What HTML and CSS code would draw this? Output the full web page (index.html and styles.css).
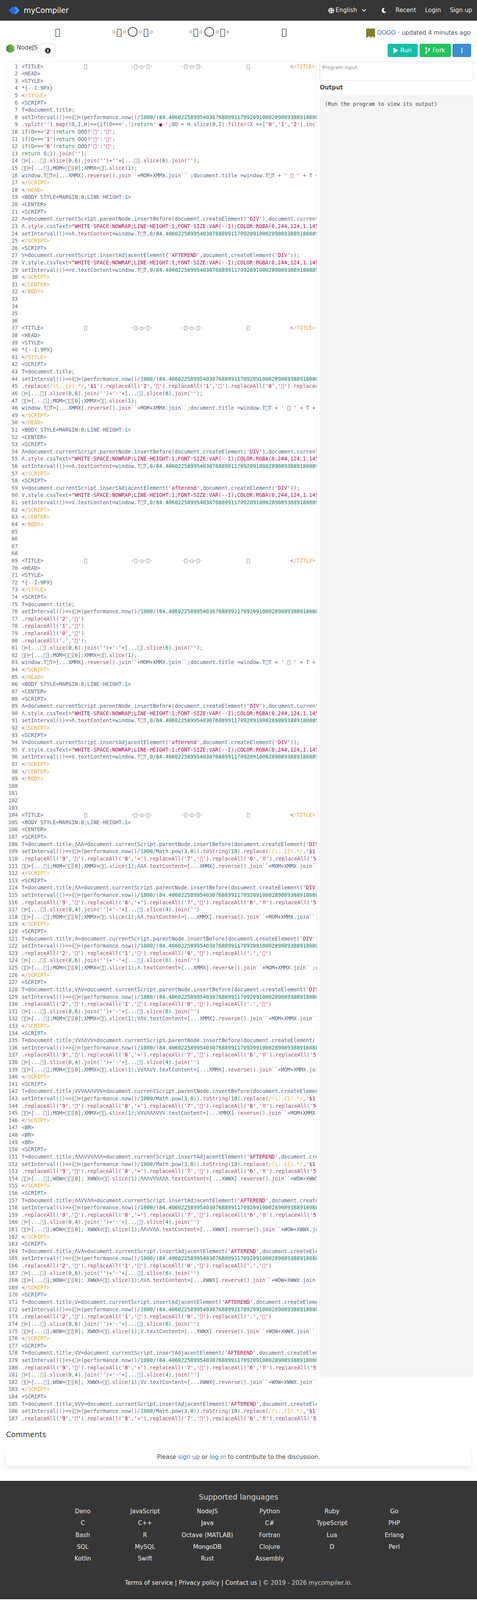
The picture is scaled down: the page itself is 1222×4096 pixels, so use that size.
FILE: index.html
```html
<!DOCTYPE html>
<html lang="en">
<head>
<meta charset="utf-8">
<title>myCompiler</title>
<link rel="stylesheet" href="styles.css">
</head>
<body>
<nav class="nav">
  <a class="brand">
    <svg class="brand-logo" viewBox="0 0 30 22"><path class="logo-back" d="M19 2 L28 11 L19 20 L10 11 Z"/><path class="logo-front" d="M11 2 L20 11 L11 20 L2 11 Z"/></svg>
    <span class="brand-name">myCompiler</span>
  </a>
  <div class="nav-right">
    <span class="lang">
      <svg class="ico-globe" viewBox="0 0 496 512"><path d="M336.5 160C322 70.7 287.8 8 248 8s-74 62.7-88.5 152h177zM152 256c0 22.2 1.2 43.5 3.3 64h185.3c2.1-20.5 3.3-41.8 3.3-64s-1.2-43.5-3.3-64H155.3c-2.1 20.5-3.3 41.8-3.3 64zm324.7-96c-28.6-67.9-86.5-120.4-158-141.6 24.4 33.8 41.2 84.7 50 141.6h108zM177.2 18.4C105.8 39.6 47.8 92.1 19.3 160h108c8.7-56.9 25.5-107.8 49.9-141.6zM487.4 192H372.7c2.1 21 3.3 42.5 3.3 64s-1.2 43-3.3 64h114.6c5.5-20.5 8.6-41.8 8.6-64s-3.1-43.5-8.5-64zM120 256c0-21.5 1.2-43 3.3-64H8.6C3.2 212.5 0 233.8 0 256s3.2 43.5 8.6 64h114.6c-2-21-3.2-42.5-3.2-64zm39.5 96c14.5 89.3 48.7 152 88.5 152s74-62.7 88.5-152h-177zm159.3 141.6c71.4-21.2 129.4-73.7 158-141.6h-108c-8.8 56.9-25.6 107.8-50 141.6zM19.3 352c28.6 67.9 86.5 120.4 158 141.6-24.4-33.8-41.2-84.7-50-141.6h-108z"/></svg>
      <span>English</span>
      <svg class="ico-chev" viewBox="0 0 14 10"><path d="M2 2 L7 7 L12 2"/></svg>
    </span>
    <svg class="ico-moon" viewBox="0 0 512 512"><path d="M283.211 512c78.962 0 151.079-35.925 198.857-94.792 7.068-8.708-.639-21.43-11.562-19.35-124.203 23.654-238.262-71.576-238.262-196.954 0-72.222 38.662-138.635 101.498-174.394 9.686-5.512 7.25-20.197-3.756-22.23A258.156 258.156 0 0 0 283.211 0c-141.309 0-256 114.511-256 256 0 141.309 114.511 256 256 256z"/></svg>
    <a class="nav-link">Recent</a>
    <a class="nav-link">Login</a>
    <a class="nav-link">Sign up</a>
  </div>
</nav>

<main class="main">
  <header class="head-row">
    <div class="title-wrap"><h1 class="title">&#xE000;                  ◦&#xE000;◦<span class="title-ring">○</span>◦&#xE000;◦            ◦&#xE000;◦<span class="title-ring">○</span>◦&#xE000;◦                  &#xE000;</h1></div>
    <div class="author">
      <svg class="avatar" viewBox="0 0 24 24"><rect width="24" height="24" fill="#7f7f30"/><rect x="6" y="21" width="4" height="3" fill="#fff"/><rect x="15" y="21" width="4" height="3" fill="#fff"/></svg>
      <a class="link">OOOO</a><span class="meta">· updated 4 minutes ago</span>
    </div>
  </header>

  <div class="tool-row">
    <div class="lang-info">
      <svg class="node-logo" viewBox="0 0 22 24"><path fill="#6aa84f" d="M11 0 L21.5 6 V18 L11 24 L.5 18 V6 Z"/><path fill="#4f8f3a" d="M11 0 L.5 6 V18 L11 24 C5 17 6 7 11 0 Z"/><path fill="#7dba62" d="M11 0 L21.5 6 V12 C19 8 15 4 11 0 Z"/></svg>
      <span class="lang-name">NodeJS</span>
      <button class="info-btn"><svg class="ico-info" viewBox="0 0 512 512"><path d="M256 8C119.043 8 8 119.083 8 256c0 136.997 111.043 248 248 248s248-111.003 248-248C504 119.083 392.957 8 256 8zm0 110c23.196 0 42 18.804 42 42s-18.804 42-42 42-42-18.804-42-42 18.804-42 42-42zm56 254c0 6.627-5.373 12-12 12h-88c-6.627 0-12-5.373-12-12v-24c0-6.627 5.373-12 12-12h12v-64h-12c-6.627 0-12-5.373-12-12v-24c0-6.627 5.373-12 12-12h64c6.627 0 12 5.373 12 12v100h12c6.627 0 12 5.373 12 12v24z"/></svg></button>
    </div>
    <div class="actions">
      <button class="btn btn-run"><svg class="ico-play" viewBox="0 0 448 512"><path d="M424.4 214.7L72.4 6.6C43.8-10.3 0 6.1 0 47.9V464c0 37.5 40.7 60.1 72.4 41.3l352-208c31.4-18.5 31.5-64.1 0-82.6z"/></svg><span>Run</span></button>
      <button class="btn btn-fork"><svg class="ico-fork" viewBox="0 0 384 512"><path d="M384 144c0-44.2-35.8-80-80-80s-80 35.8-80 80c0 36.4 24.3 67.1 57.5 76.8-.6 16.1-4.2 28.5-11 36.9-15.4 19.2-49.3 22.4-85.2 25.7-28.2 2.6-57.4 5.4-81.3 16.9v-144c32.5-10.2 56-40.5 56-76.3 0-44.2-35.8-80-80-80S0 35.8 0 80c0 35.8 23.5 66.1 56 76.3v199.3C23.5 365.9 0 396.2 0 432c0 44.2 35.8 80 80 80s80-35.8 80-80c0-34-21.2-63.1-51.2-74.6 3.1-5.2 7.8-9.8 14.9-13.4 16.2-8.2 40.4-10.4 66.1-12.8 42.2-3.9 90-8.4 118.2-43.4 14-17.4 21.1-39.8 21.6-67.9 31.6-10.8 54.4-40.7 54.4-75.9zM80 64c8.8 0 16 7.2 16 16s-7.2 16-16 16-16-7.2-16-16 7.2-16 16-16zm0 384c-8.8 0-16-7.2-16-16s7.2-16 16-16 16 7.2 16 16-7.2 16-16 16zm224-320c8.8 0 16 7.2 16 16s-7.2 16-16 16-16-7.2-16-16 7.2-16 16-16z"/></svg><span>Fork</span></button>
      <button class="btn btn-more"><svg class="ico-more" viewBox="0 0 192 512"><path d="M96 184c39.8 0 72 32.2 72 72s-32.2 72-72 72-72-32.2-72-72 32.2-72 72-72zM24 80c0 39.8 32.2 72 72 72s72-32.2 72-72S135.8 8 96 8 24 40.2 24 80zm0 352c0 39.8 32.2 72 72 72s72-32.2 72-72-32.2-72-72-72-72 32.2-72 72z"/></svg></button>
    </div>
  </div>

  <div class="workspace">
    <div class="editor"><pre class="source" id="source">&lt;TITLE>             ▯              ◦▯◦○◦▯◦         ◦▯◦○◦▯◦              ▯             &lt;/TITLE>
&lt;HEAD>
&lt;STYLE>
*{--I:9PX}
&lt;/STYLE>
&lt;SCRIPT>
T=document.title;
setInterval(()=>{▯=(performance.now()/1000/(84.4060225899540307688991170920910002890893889180889
.split('').map((O,I,H)=>{if(O==='.')return' ● ';OO = H.slice(0,I).filter(X =>['0','1','2'].includes(X)
if(O==='2')return OOO?'▯':'▯';
if(O==='1')return OOO?'▯':'▯';
if(O==='0')return OOO?'▯':'▯';
return O;}).join('');
▯=[...▯].slice(0,6).join('')+''+[...▯].slice(6).join('');
▯▯=[...▯];MOM=▯▯[0];XMMX=▯▯.slice(1);
window.T▯T=[...XMMX].reverse().join``+MOM+XMMX.join`` ;document.title =window.T▯T + ' ▯ ' + T + '
&lt;/SCRIPT>
&lt;/HEAD>
&lt;BODY STYLE=MARGIN:0;LINE-HEIGHT:1>
&lt;CENTER>
&lt;SCRIPT>
Λ=document.currentScript.parentNode.insertBefore(document.createElement('DIV'),document.currentScript)
Λ.style.cssText="WHITE-SPACE:NOWRAP;LINE-HEIGHT:1;FONT-SIZE:VAR(--I);COLOR:RGBA(0,244,124,1.145)"
setInterval(()=>Λ.textContent=window.T▯T,0/84.4060225899540307688991170920910002890893889180889
&lt;/SCRIPT>
&lt;SCRIPT>
V=document.currentScript.insertAdjacentElement('AFTEREND',document.createElement('DIV'));
V.style.cssText="WHITE-SPACE:NOWRAP;LINE-HEIGHT:1;FONT-SIZE:VAR(--I);COLOR:RGBA(0,244,124,1.145)"
setInterval(()=>V.textContent=window.T▯T,0/84.4060225899540307688991170920910002890893889180889
&lt;/SCRIPT>
&lt;/CENTER>
&lt;/BODY>




&lt;TITLE>             ▯              ◦▯◦○◦▯◦         ◦▯◦○◦▯◦              ▯             &lt;/TITLE>
&lt;HEAD>
&lt;STYLE>
*{--I:9PX}
&lt;/STYLE>
&lt;SCRIPT>
T=document.title;
setInterval(()=>{▯=(performance.now()/1000/(84.4060225899540307688991170920910002890893889180889
.replace(/(\..{}).*/,'$1').replaceAll('2','▯').replaceAll('1','▯').replaceAll('0','▯').replaceAll('.','▯')
▯=[...▯].slice(0,6).join('')+'◦'+[...▯].slice(6).join('');
▯▯=[...▯];MOM=▯▯[0];XMMX=▯▯.slice(1);
window.T▯T=[...XMMX].reverse().join``+MOM+XMMX.join``;document.title =window.T▯T + ' ▯ ' + T + '
&lt;/SCRIPT>
&lt;/HEAD>
&lt;BODY STYLE=MARGIN:0;LINE-HEIGHT:1>
&lt;CENTER>
&lt;SCRIPT>
Λ=document.currentScript.parentNode.insertBefore(document.createElement('DIV'),document.currentScript)
Λ.style.cssText="WHITE-SPACE:NOWRAP;LINE-HEIGHT:1;FONT-SIZE:VAR(--I);COLOR:RGBA(0,244,124,1.145)"
setInterval(()=>Λ.textContent=window.T▯T,0/84.4060225899540307688991170920910002890893889180889
&lt;/SCRIPT>
&lt;SCRIPT>
V=document.currentScript.insertAdjacentElement('afterend',document.createElement('DIV'));
V.style.cssText="WHITE-SPACE:NOWRAP;LINE-HEIGHT:1;FONT-SIZE:VAR(--I);COLOR:RGBA(0,244,124,1.145)"
setInterval(()=>V.textContent=window.T▯T,0/84.4060225899540307688991170920910002890893889180889
&lt;/SCRIPT>
&lt;/CENTER>
&lt;/BODY>




&lt;TITLE>             ▯              ◦▯◦○◦▯◦         ◦▯◦○◦▯◦              ▯             &lt;/TITLE>
&lt;HEAD>
&lt;STYLE>
*{--I:9PX}
&lt;/STYLE>
&lt;SCRIPT>
T=document.title;
setInterval(()=>{▯=(performance.now()/1000/(84.4060225899540307688991170920910002890893889180889
.replaceAll('2','▯')
.replaceAll('1','▯')
.replaceAll('0','▯')
.replaceAll('.','▯');
▯=[...▯].slice(0,6).join('')+'◦'+[...▯].slice(6).join('');
▯▯=[...▯];MOM=▯▯[0];XMMX=▯▯.slice(1);
window.T▯T=[...XMMX].reverse().join``+MOM+XMMX.join``;document.title =window.T▯T + ' ▯ ' + T + '
&lt;/SCRIPT>
&lt;/HEAD>
&lt;BODY STYLE=MARGIN:0;LINE-HEIGHT:1>
&lt;CENTER>
&lt;SCRIPT>
Λ=document.currentScript.parentNode.insertBefore(document.createElement('DIV'),document.currentScript)
Λ.style.cssText="WHITE-SPACE:NOWRAP;LINE-HEIGHT:1;FONT-SIZE:VAR(--I);COLOR:RGBA(0,244,124,1.145)"
setInterval(()=>Λ.textContent=window.T▯T,0/84.4060225899540307688991170920910002890893889180889
&lt;/SCRIPT>
&lt;SCRIPT>
V=document.currentScript.insertAdjacentElement('afterend',document.createElement('DIV'));
V.style.cssText="WHITE-SPACE:NOWRAP;LINE-HEIGHT:1;FONT-SIZE:VAR(--I);COLOR:RGBA(0,244,124,1.145)"
setInterval(()=>V.textContent=window.T▯T,0/84.4060225899540307688991170920910002890893889180889
&lt;/SCRIPT>
&lt;/CENTER>
&lt;/BODY>




&lt;TITLE>             ▯              ◦▯◦○◦▯◦         ◦▯◦○◦▯◦              ▯             &lt;/TITLE>
&lt;BODY STYLE=MARGIN:0;LINE-HEIGHT:1>
&lt;CENTER>
&lt;SCRIPT>
T=document.title;ΛΛΛ=document.currentScript.parentNode.insertBefore(document.createElement('DIV'),d
setInterval(()=>{▯=(performance.now()/1000/Math.pow(3,0)).toString(10).replace(/(\..{}).*/,'$1')
.replaceAll('9','▯').replaceAll('8','∗').replaceAll('7','▯').replaceAll('6','⠿').replaceAll('5','▯')
▯▯=[...▯];MOM=▯▯[0];XMMX=▯▯.slice(1);ΛΛΛ.textContent=[...XMMX].reverse().join``+MOM+XMMX.join``;
&lt;/SCRIPT>
&lt;SCRIPT>
T=document.title;ΛΛ=document.currentScript.parentNode.insertBefore(document.createElement('DIV'),d
setInterval(()=>{▯=(performance.now()/1000/(84.4060225899540307688991170920910002890893889180889
.replaceAll('9','▯').replaceAll('8','∗').replaceAll('7','▯').replaceAll('6','⠿').replaceAll('5','▯')
▯=[...▯].slice(0,4).join('')+'◦'+[...▯].slice(4).join('')
▯▯=[...▯];MOM=▯▯[0];XMMX=▯▯.slice(1);ΛΛ.textContent=[...XMMX].reverse().join``+MOM+XMMX.join``;
&lt;/SCRIPT>
&lt;SCRIPT>
T=document.title;Λ=document.currentScript.parentNode.insertBefore(document.createElement('DIV'),d
setInterval(()=>{▯=(performance.now()/1000/(84.4060225899540307688991170920910002890893889180889
.replaceAll('2','▯').replaceAll('1','▯').replaceAll('0','▯').replaceAll('.','▯')
▯=[...▯].slice(0,6).join('')+'◦'+[...▯].slice(6).join('')
▯▯=[...▯];MOM=▯▯[0];XMMX=▯▯.slice(1);Λ.textContent=[...XMMX].reverse().join``+MOM+XMMX.join``;d
&lt;/SCRIPT>
&lt;SCRIPT>
T=document.title;VΛV=document.currentScript.parentNode.insertBefore(document.createElement('DIV'),d
setInterval(()=>{▯=(performance.now()/1000/(84.4060225899540307688991170920910002890893889180889
.replaceAll('2','▯').replaceAll('1','▯').replaceAll('0','▯').replaceAll('.','▯')
▯=[...▯].slice(0,6).join('')+'◦'+[...▯].slice(6).join('')
▯▯=[...▯];MOM=▯▯[0];XMMX=▯▯.slice(1);VΛV.textContent=[...XMMX].reverse().join``+MOM+XMMX.join``;d
&lt;/SCRIPT>
&lt;SCRIPT>
T=document.title;VVΛΛVV=document.currentScript.parentNode.insertBefore(document.createElement('DIV'),d
setInterval(()=>{▯=(performance.now()/1000/(84.4060225899540307688991170920910002890893889180889
.replaceAll('9','▯').replaceAll('8','∗').replaceAll('7','▯').replaceAll('6','⠿').replaceAll('5','▯')
▯=[...▯].slice(0,4).join('')+'◦'+[...▯].slice(4).join('')
▯▯=[...▯];MOM=▯▯[0];XMMX=▯▯.slice(1);VVΛΛVV.textContent=[...XMMX].reverse().join``+MOM+XMMX.join``;d
&lt;/SCRIPT>
&lt;SCRIPT>
T=document.title;VVVΛΛΛVVV=document.currentScript.parentNode.insertBefore(document.createElement('DIV'),d
setInterval(()=>{▯=(performance.now()/1000/Math.pow(3,0)).toString(10).replace(/(\..{}).*/,'$1')
.replaceAll('9','▯').replaceAll('8','∗').replaceAll('7','▯').replaceAll('6','⠿').replaceAll('5','▯')
▯▯=[...▯];MOM=▯▯[0];XMMX=▯▯.slice(1);VVVΛΛΛVVV.textContent=[...XMMX].reverse().join``+MOM+XMMX.join``;
&lt;/SCRIPT>
&lt;BR>
&lt;BR>
&lt;BR>
&lt;SCRIPT>
T=document.title;ΛΛΛVVVΛΛΛ=document.currentScript.insertAdjacentElement('AFTEREND',document.createElement('DIV'))
setInterval(()=>{▯=(performance.now()/1000/Math.pow(3,0)).toString(10).replace(/(\..{}).*/,'$1')
.replaceAll('9','▯').replaceAll('8','∗').replaceAll('7','▯').replaceAll('6','⠿').replaceAll('5','▯')
▯▯=[...▯];WOW=▯▯[0]; XWWX=▯▯.slice(1);ΛΛΛVVVΛΛΛ.textContent=[...XWWX].reverse().join``+WOW+XWWX.join``;
&lt;/SCRIPT>
&lt;SCRIPT>
T=document.title;ΛΛVVΛΛ=document.currentScript.insertAdjacentElement('AFTEREND',document.createElement('DIV'))
setInterval(()=>{▯=(performance.now()/1000/(84.4060225899540307688991170920910002890893889180889
.replaceAll('9','▯').replaceAll('8','∗').replaceAll('7','▯').replaceAll('6','⠿').replaceAll('5','▯')
▯=[...▯].slice(0,4).join('')+'◦'+[...▯].slice(4).join('')
▯▯=[...▯];WOW=▯▯[0]; XWWX=▯▯.slice(1);ΛΛVVΛΛ.textContent=[...XWWX].reverse().join``+WOW+XWWX.join``;
&lt;/SCRIPT>
&lt;SCRIPT>
T=document.title;ΛVΛ=document.currentScript.insertAdjacentElement('AFTEREND',document.createElement('DIV'))
setInterval(()=>{▯=(performance.now()/1000/(84.4060225899540307688991170920910002890893889180889
.replaceAll('2','▯').replaceAll('1','▯').replaceAll('0','▯').replaceAll('.','▯')
▯=[...▯].slice(0,6).join('')+'◦'+[...▯].slice(6).join('')
▯▯=[...▯];WOW=▯▯[0]; XWWX=▯▯.slice(1);ΛVΛ.textContent=[...XWWX].reverse().join``+WOW+XWWX.join``;
&lt;/SCRIPT>
&lt;SCRIPT>
T=document.title;V=document.currentScript.insertAdjacentElement('AFTEREND',document.createElement('DIV'))
setInterval(()=>{▯=(performance.now()/1000/(84.4060225899540307688991170920910002890893889180889
.replaceAll('2','▯').replaceAll('1','▯').replaceAll('0','▯').replaceAll('.','▯')
▯=[...▯].slice(0,6).join('')+'◦'+[...▯].slice(6).join('')
▯▯=[...▯];WOW=▯▯[0]; XWWX=▯▯.slice(1);V.textContent=[...XWWX].reverse().join``+WOW+XWWX.join``;
&lt;/SCRIPT>
&lt;SCRIPT>
T=document.title;VV=document.currentScript.insertAdjacentElement('AFTEREND',document.createElement('DIV'))
setInterval(()=>{▯=(performance.now()/1000/(84.4060225899540307688991170920910002890893889180889
.replaceAll('9','▯').replaceAll('8','∗').replaceAll('7','▯').replaceAll('6','⠿').replaceAll('5','▯')
▯=[...▯].slice(0,4).join('')+'◦'+[...▯].slice(4).join('')
▯▯=[...▯];WOW=▯▯[0]; XWWX=▯▯.slice(1);VV.textContent=[...XWWX].reverse().join``+WOW+XWWX.join``;
&lt;/SCRIPT>
&lt;SCRIPT>
T=document.title;VVV=document.currentScript.insertAdjacentElement('AFTEREND',document.createElement('DIV'))
setInterval(()=>{▯=(performance.now()/1000/Math.pow(3,0)).toString(10).replace(/(\..{}).*/,'$1')
.replaceAll('9','▯').replaceAll('8','∗').replaceAll('7','▯').replaceAll('6','⠿').replaceAll('5','▯')</pre></div>
    <aside class="side">
      <textarea class="stdin" placeholder="Program input"></textarea>
      <h3 class="out-title">Output</h3>
      <pre class="out">(Run the program to view its output)</pre>
    </aside>
  </div>

  <section class="comments">
    <h2 class="comments-title">Comments</h2>
    <div class="comment-box">Please <a class="link">sign up</a> or <a class="link">log in</a> to contribute to the discussion.</div>
  </section>
</main>

<footer class="footer">
  <h2 class="foot-title">Supported languages</h2>
  <div class="lang-grid">
    <a>Deno</a><a>JavaScript</a><a>NodeJS</a><a>Python</a><a>Ruby</a><a>Go</a>
    <a>C</a><a>C++</a><a>Java</a><a>C#</a><a>TypeScript</a><a>PHP</a>
    <a>Bash</a><a>R</a><a>Octave (MATLAB)</a><a>Fortran</a><a>Lua</a><a>Erlang</a>
    <a>SQL</a><a>MySQL</a><a>MongoDB</a><a>Clojure</a><a>D</a><a>Perl</a>
    <a>Kotlin</a><a>Swift</a><a>Rust</a><a>Assembly</a>
  </div>
  <p class="foot-links"><a>Terms of service</a> | <a>Privacy policy</a> | <a>Contact us</a> | <span class="foot-copy">© 2019 - 2026 mycompiler.io.</span></p>
</footer>
<script src="script.js"></script>
</body>
</html>
```
FILE: styles.css
```css
* { box-sizing: border-box; }
body {
  margin: 0;
  background: #fff;
  color: #4a4a4a;
  font: 15.2px/22.8px "DejaVu Sans", sans-serif;
}
h1, h2, h3, p { margin: 0; font-weight: normal; }
svg { display: block; fill: currentColor; flex: none; }
button { font: inherit; cursor: pointer; }

/* nav */
.nav {
  height: 53.2px;
  background: #363636;
  color: #f2f2f2;
  display: flex;
  align-items: center;
  justify-content: space-between;
  padding: 0 12.35px 0 21.85px;
}
.brand { display: flex; align-items: center; gap: 10.45px; }
.brand-logo { width: 28.5px; height: 20.9px; }
.logo-front { fill: #2a62f2; stroke: #2a62f2; stroke-width: 3; stroke-linejoin: round; }
.logo-back { fill: #3f9cf6; stroke: #3f9cf6; stroke-width: 3; stroke-linejoin: round; }
.brand-name { font-size: 19px; color: #fff; }
.nav-right { display: flex; align-items: center; gap: 22.8px; }
.lang { display: flex; align-items: center; gap: 3.8px; margin-right: 15.2px; }
.ico-globe { width: 15.2px; height: 16.15px; }
.ico-chev { width: 13.3px; height: 9.5px; margin-left: 7.6px; fill: none; stroke: currentColor; stroke-width: 2.2; }
.ico-moon { width: 13.3px; height: 15.2px; }

/* header */
.head-row {
  height: 58.9px;
  display: flex;
  align-items: center;
  justify-content: space-between;
}
.title-wrap { width: 875.9px; display: flex; justify-content: center; }
.title { font-size: 22.8px; line-height: 28.5px; color: #363636; white-space: pre; }
.title-ring { font-size: 32.3px; line-height: 0; }
.author { display: flex; align-items: center; padding-right: 16.15px; margin-top: 3.8px; }
.avatar { width: 22.8px; height: 22.8px; margin-right: 4.75px; }
.link { color: #3e74b8; }
.meta { margin-left: 5.7px; color: #555; }

.tool-row {
  display: flex;
  justify-content: space-between;
  align-items: flex-start;
  padding: 0 15.2px;
  height: 34.2px;
}
.lang-info { display: flex; align-items: flex-start; padding-left: .95px; }
.node-logo { width: 20.9px; height: 22.8px; margin-top: .95px; margin-right: 5.7px; }
.lang-name { font-size: 15.2px; line-height: 20.9px; }
.info-btn {
  width: 39.9px; height: 34.2px; margin-left: 5.7px;
  border: 1px solid #dbdbdb; border-radius: 3.8px; background: #fff;
  display: flex; align-items: center; justify-content: center; color: #363636;
}
.ico-info { width: 15.2px; height: 15.2px; }
.actions { display: flex; gap: 4.75px; }
.btn {
  height: 34.2px; border: 0; border-radius: 3.8px; color: #fff;
  display: flex; align-items: center; justify-content: center; gap: 5.7px;
}
.btn-run { width: 76.95px; background: #14bfa4; }
.btn-fork { width: 79.8px; background: #20c45c; }
.btn-more { width: 47.5px; background: #3e8ed0; }
.ico-play { width: 11.4px; height: 15.2px; }
.ico-fork { width: 13.3px; height: 17.1px; }
.ico-more { width: 4.75px; height: 15.2px; }

/* workspace */
.workspace {
  display: flex;
  gap: 6.65px;
  padding: 11.4px 9.5px 0 15.2px;
  align-items: flex-start;
}
.editor {
  width: 797.05px;
  height: 3479.85px;
  border: 1px solid #eee;
  border-radius: 3.8px;
  overflow: hidden;
  background: #fff;
  padding-top: 2.85px;
  flex: none;
}
.source { margin: 0; font: 13.3px/18.62px "DejaVu Sans Mono", monospace; color: #5f6470; }
.line { display: flex; height: 18.62px; white-space: pre; }
.ln { flex: none; width: 29.45px; margin-right: 9.5px; text-align: right; color: #6c6f73; }
.t-id { color: #56688a; }
.t-prop { color: #9a4f72; }
.t-str { color: #a8125e; }
.t-num { color: #1d7f70; }
.t-kw { color: #2a8a4c; }
.t-end { color: #e8a33a; }

.side { flex: 1; min-width: 0; }
.stdin {
  display: block; width: 100%; height: 48.45px; resize: none;
  border: 1px solid #dbdbdb; border-radius: 2.85px; padding: 5.7px;
  font: 12.67px/17.1px "DejaVu Sans", sans-serif; color: #363636; outline: none;
}
.stdin::placeholder { color: #8f8f8f; opacity: 1; }
.out-title { font-size: 15.2px; font-weight: bold; color: #4a4a4a; line-height: 22.8px; margin: 6.65px 0 8.55px; }
.out {
  margin: 0; height: 3280.35px; background: #f5f5f5; border-radius: 3.8px;
  padding: 13.3px; color: #4a4a4a;
  font: 13.3px/19px "DejaVu Sans Mono", monospace;
}

/* comments */
.comments { padding: 20.9px 15.2px 38px; }
.comments-title { font-size: 19px; line-height: 28.5px; color: #363636; margin-bottom: 20.9px; }
.comment-box {
  height: 45.6px;
  border-radius: 5.7px;
  background: #fff;
  text-align: center;
  line-height: 45.6px;
  box-shadow: 0 7.6px 15.2px -1.9px rgba(10,10,10,.1), 0 0 0 1px rgba(10,10,10,.02);
}

/* footer */
.footer {
  height: 303px;
  background: #363636;
  color: #eee;
  text-align: center;
  padding-top: 26.6px;
}
.foot-title { font-size: 19px; line-height: 28.5px; color: #d8d8d8; margin-bottom: 7.6px; }
.lang-grid {
  width: 957.6px;
  margin: 0 auto;
  display: grid;
  grid-template-columns: repeat(6, 159.6px);
  grid-auto-rows: 30.4px;
  align-items: center;
  justify-items: center;
}
.foot-links { margin-top: 35.15px; line-height: 22.8px; }
.foot-copy { color: #d0d0d0; }
```
FILE: script.js
```js
// Small syntax highlighter and line-number gutter for the code listing.
(function () {
  var pre = document.getElementById('source');
  // The listing uses characters no installed font covers; they show as empty boxes.
  var lines = pre.textContent.replace(/▯/g, '\uE000').split('\n');
  var token = new RegExp([
    "('[^']*'|\"[^\"]*\")",                     // 1 string
    "(\\/\\(\\\\\\.\\.\\{\\}\\)\\.\\*\\/)",     // 2 regex
    "((?<![.\\w])\\.[A-Za-z\\uE000]+)",         // 3 property
    "((?<![A-Za-zΛ])\\d+(?:\\.\\d+)?)",         // 4 number
    "(\\b(?:if|return)\\b)",                    // 5 keyword
    "([A-Za-zΛ]+)"                              // 6 identifier
  ].join('|'), 'g');
  var classes = [null, 't-str', 't-end', 't-prop', 't-num', 't-kw', 't-id'];

  function span(cls, text) {
    var s = document.createElement('span');
    if (cls) s.className = cls;
    s.textContent = text;
    return s;
  }

  function fill(el, text) {
    var m, last = 0;
    if (/^<\//.test(text)) {
      el.appendChild(document.createTextNode('<'));
      el.appendChild(span('t-end', text.slice(1)));
      return;
    }
    var close = text.indexOf('</');
    token.lastIndex = 0;
    var limit = close > 0 ? close : text.length;
    while ((m = token.exec(text)) && m.index < limit) {
      el.appendChild(document.createTextNode(text.slice(last, m.index)));
      for (var i = 1; i < classes.length; i++) {
        if (m[i] !== undefined) el.appendChild(span(classes[i], m[0]));
      }
      last = m.index + m[0].length;
    }
    el.appendChild(document.createTextNode(text.slice(last, limit)));
    if (close > 0) {
      el.appendChild(document.createTextNode('<'));
      el.appendChild(span('t-end', text.slice(close + 1)));
    }
  }

  pre.textContent = '';
  lines.forEach(function (text, i) {
    var row = document.createElement('div');
    row.className = 'line';
    row.appendChild(span('ln', String(i + 1)));
    var code = span('lc', '');
    fill(code, text);
    row.appendChild(code);
    pre.appendChild(row);
  });
})();
```
